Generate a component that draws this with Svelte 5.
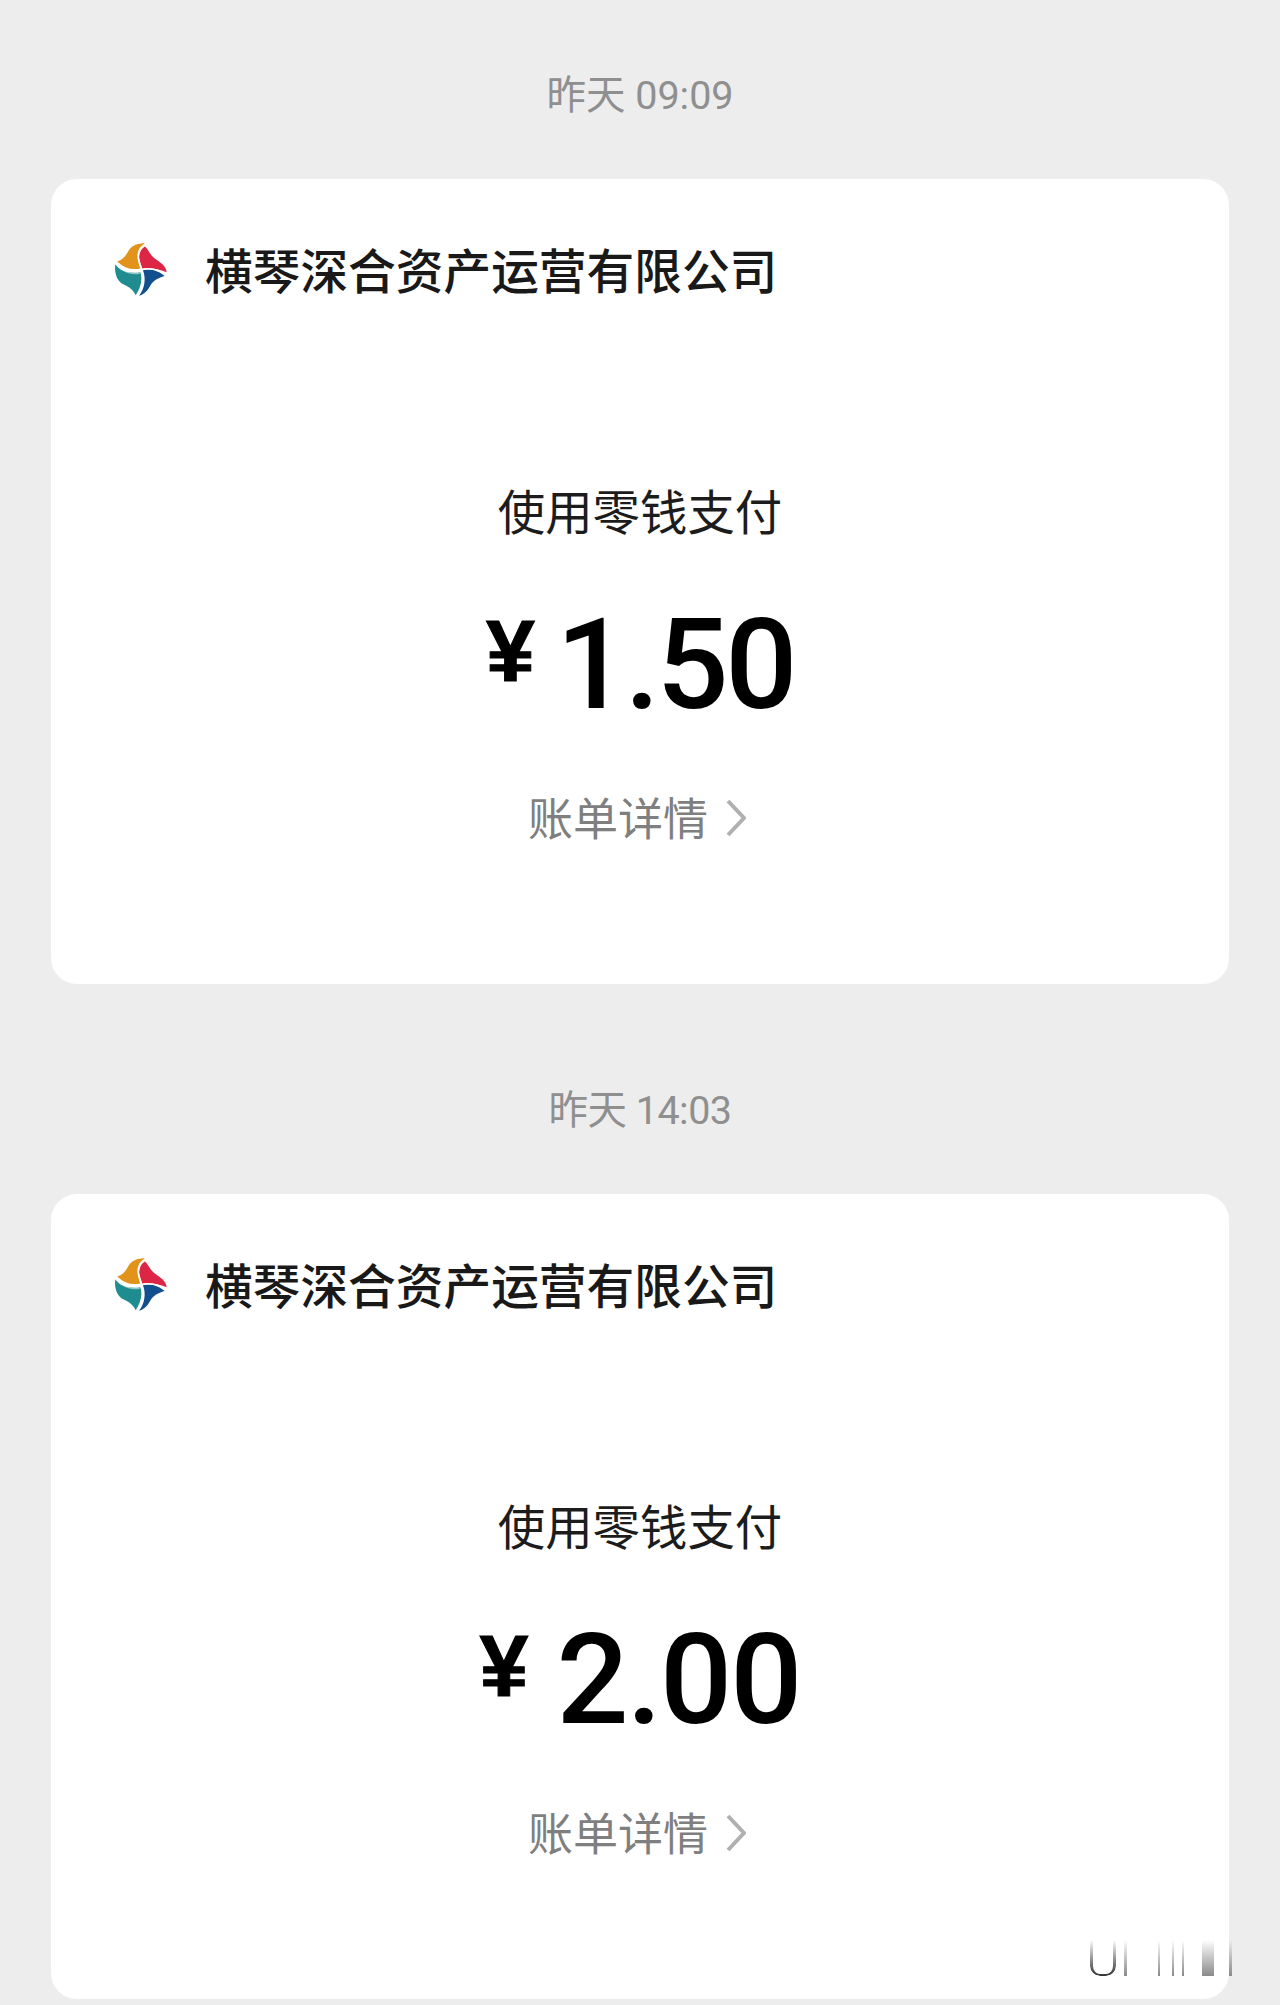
<script lang="ts">
  const payments = [
    { time: "昨天 09:09", amount: "1.50", wide: false },
    { time: "昨天 14:03", amount: "2.00", wide: true },
  ];
  const company = "横琴深合资产运营有限公司";
</script>

<main class="page">
  {#each payments as p}
    <div class="time" class:tight={p.wide}>{p.time}</div>
    <section class="card">
      <header class="merchant">
        <svg class="logo" viewBox="75 72 158 160" aria-hidden="true">
          <path d="M82 128C100 122 108 110 118 92C128 78 145 72 166 72C148 84 138 100 146 130L152 150C125 156 95 150 82 128Z" fill="#e2931a" />
          <path d="M166 82C178 92 180 108 198 120C212 130 230 140 232 160C205 150 180 146 158 150L150 125C143 105 150 92 166 82Z" fill="#dd2545" />
          <path d="M160 154C185 148 210 158 226 172C205 178 190 186 180 205C172 220 160 228 148 232C165 210 170 180 160 154Z" fill="#114f8e" />
          <path d="M76 136C90 158 120 165 152 160C160 185 152 210 138 230C128 212 118 205 100 197C82 188 72 165 76 136Z" fill="#1f8d90" />
          <g fill="none" stroke="#fff" stroke-width="4">
            <path d="M84 132C104 152 130 156 156 150C146 126 138 100 166 76" />
            <path d="M156 152C184 146 208 152 228 168" />
            <path d="M154 156C166 184 162 208 144 230" />
            <path d="M90 148C108 162 128 166 150 164" opacity=".5" />
          </g>
        </svg>
        <span class="name">{company}</span>
      </header>
      <div class="method">使用零钱支付</div>
      <div class="amount" class:wide={p.wide}>
        <span class="yen">¥</span><span class="num">{p.amount}</span>
      </div>
      <div class="detail">
        <span>账单详情</span>
        <svg class="chev" viewBox="0 0 20 38" aria-hidden="true">
          <path d="M2 2L18 19L2 36" fill="none" stroke="#b0b0b0" stroke-width="4" />
        </svg>
      </div>
    </section>
  {/each}
  <div class="mark" aria-hidden="true">
    <i class="cup"></i><i class="b1"></i><i class="b2"></i><i class="b3"></i><i class="b4"></i><i class="b5"></i><i class="b6"></i>
  </div>
</main>

<style>
  :global(body) {
    margin: 0;
    background: #ededed;
  }

  .page {
    position: relative;
    height: 2005px;
    padding: 0 51px;
    box-sizing: border-box;
    overflow: hidden;
    font-family: "Roboto", "Noto Sans CJK SC", sans-serif;
  }

  .time {
    height: 38px;
    line-height: 38px;
    padding: 77px 0 64px;
    text-align: center;
    font-size: 39.5px;
    color: #8f8f8f;
  }

  .time:not(:first-child) {
    padding-top: 108px;
  }

  .time.tight {
    letter-spacing: -0.5px;
  }

  .card {
    height: 805px;
    background: #fff;
    border-radius: 26px;
    display: flex;
    flex-direction: column;
    align-items: center;
  }

  .merchant {
    align-self: stretch;
    height: 56px;
    margin-top: 62px;
    padding-left: 64px;
    display: flex;
    align-items: center;
    gap: 38px;
  }

  .logo {
    width: 52px;
    height: 53px;
    flex: none;
  }

  .name {
    font-family: "Noto Sans CJK SC", sans-serif;
    font-size: 47.7px;
    font-weight: 500;
    color: #191919;
    line-height: 56px;
  }

  .method {
    margin-top: 185px;
    height: 56px;
    line-height: 56px;
    font-family: "Noto Sans CJK SC", sans-serif;
    font-size: 47.4px;
    color: #1c1c1c;
  }

  .amount {
    margin-top: 67px;
    height: 120px;
    display: flex;
    align-items: flex-start;
    color: #000;
  }

  .yen {
    font-family: "Liberation Sans", sans-serif;
    font-weight: 700;
    font-size: 88px;
    line-height: 92px;
    margin-right: 21px;
    -webkit-text-stroke: 1px #000;
  }

  .wide .yen {
    margin-right: 28px;
  }

  .num {
    font-size: 127px;
    font-weight: 500;
    line-height: 120px;
    letter-spacing: -3.5px;
  }

  .wide .num {
    letter-spacing: -2px;
  }

  .detail {
    margin-top: 63px;
    margin-left: -6px;
    height: 56px;
    display: flex;
    align-items: center;
    gap: 18px;
    font-family: "Noto Sans CJK SC", sans-serif;
    font-size: 45px;
    color: #7f7f7f;
  }

  .chev {
    width: 20px;
    height: 38px;
    margin-top: 3px;
  }

  .mark {
    position: absolute;
    left: 1090px;
    top: 1940px;
    width: 170px;
    height: 36px;
  }

  .mark i {
    position: absolute;
    top: 0;
    height: 36px;
    background: linear-gradient(#ffffff00, #8a8a8a);
  }

  .mark .cup {
    left: 0;
    width: 26px;
    box-sizing: border-box;
    background: none;
    border: solid #333;
    border-width: 0 3px 2px;
    border-radius: 0 0 10px 10px;
    mask-image: linear-gradient(transparent, #000);
  }

  .b1 { left: 34px; width: 3px; }
  .b2 { left: 68px; width: 2px; }
  .b3 { left: 82px; width: 2px; }
  .b4 { left: 92px; width: 2px; }
  .b5 { left: 112px; width: 12px; }
  .b6 { left: 139px; width: 3px; }
</style>
